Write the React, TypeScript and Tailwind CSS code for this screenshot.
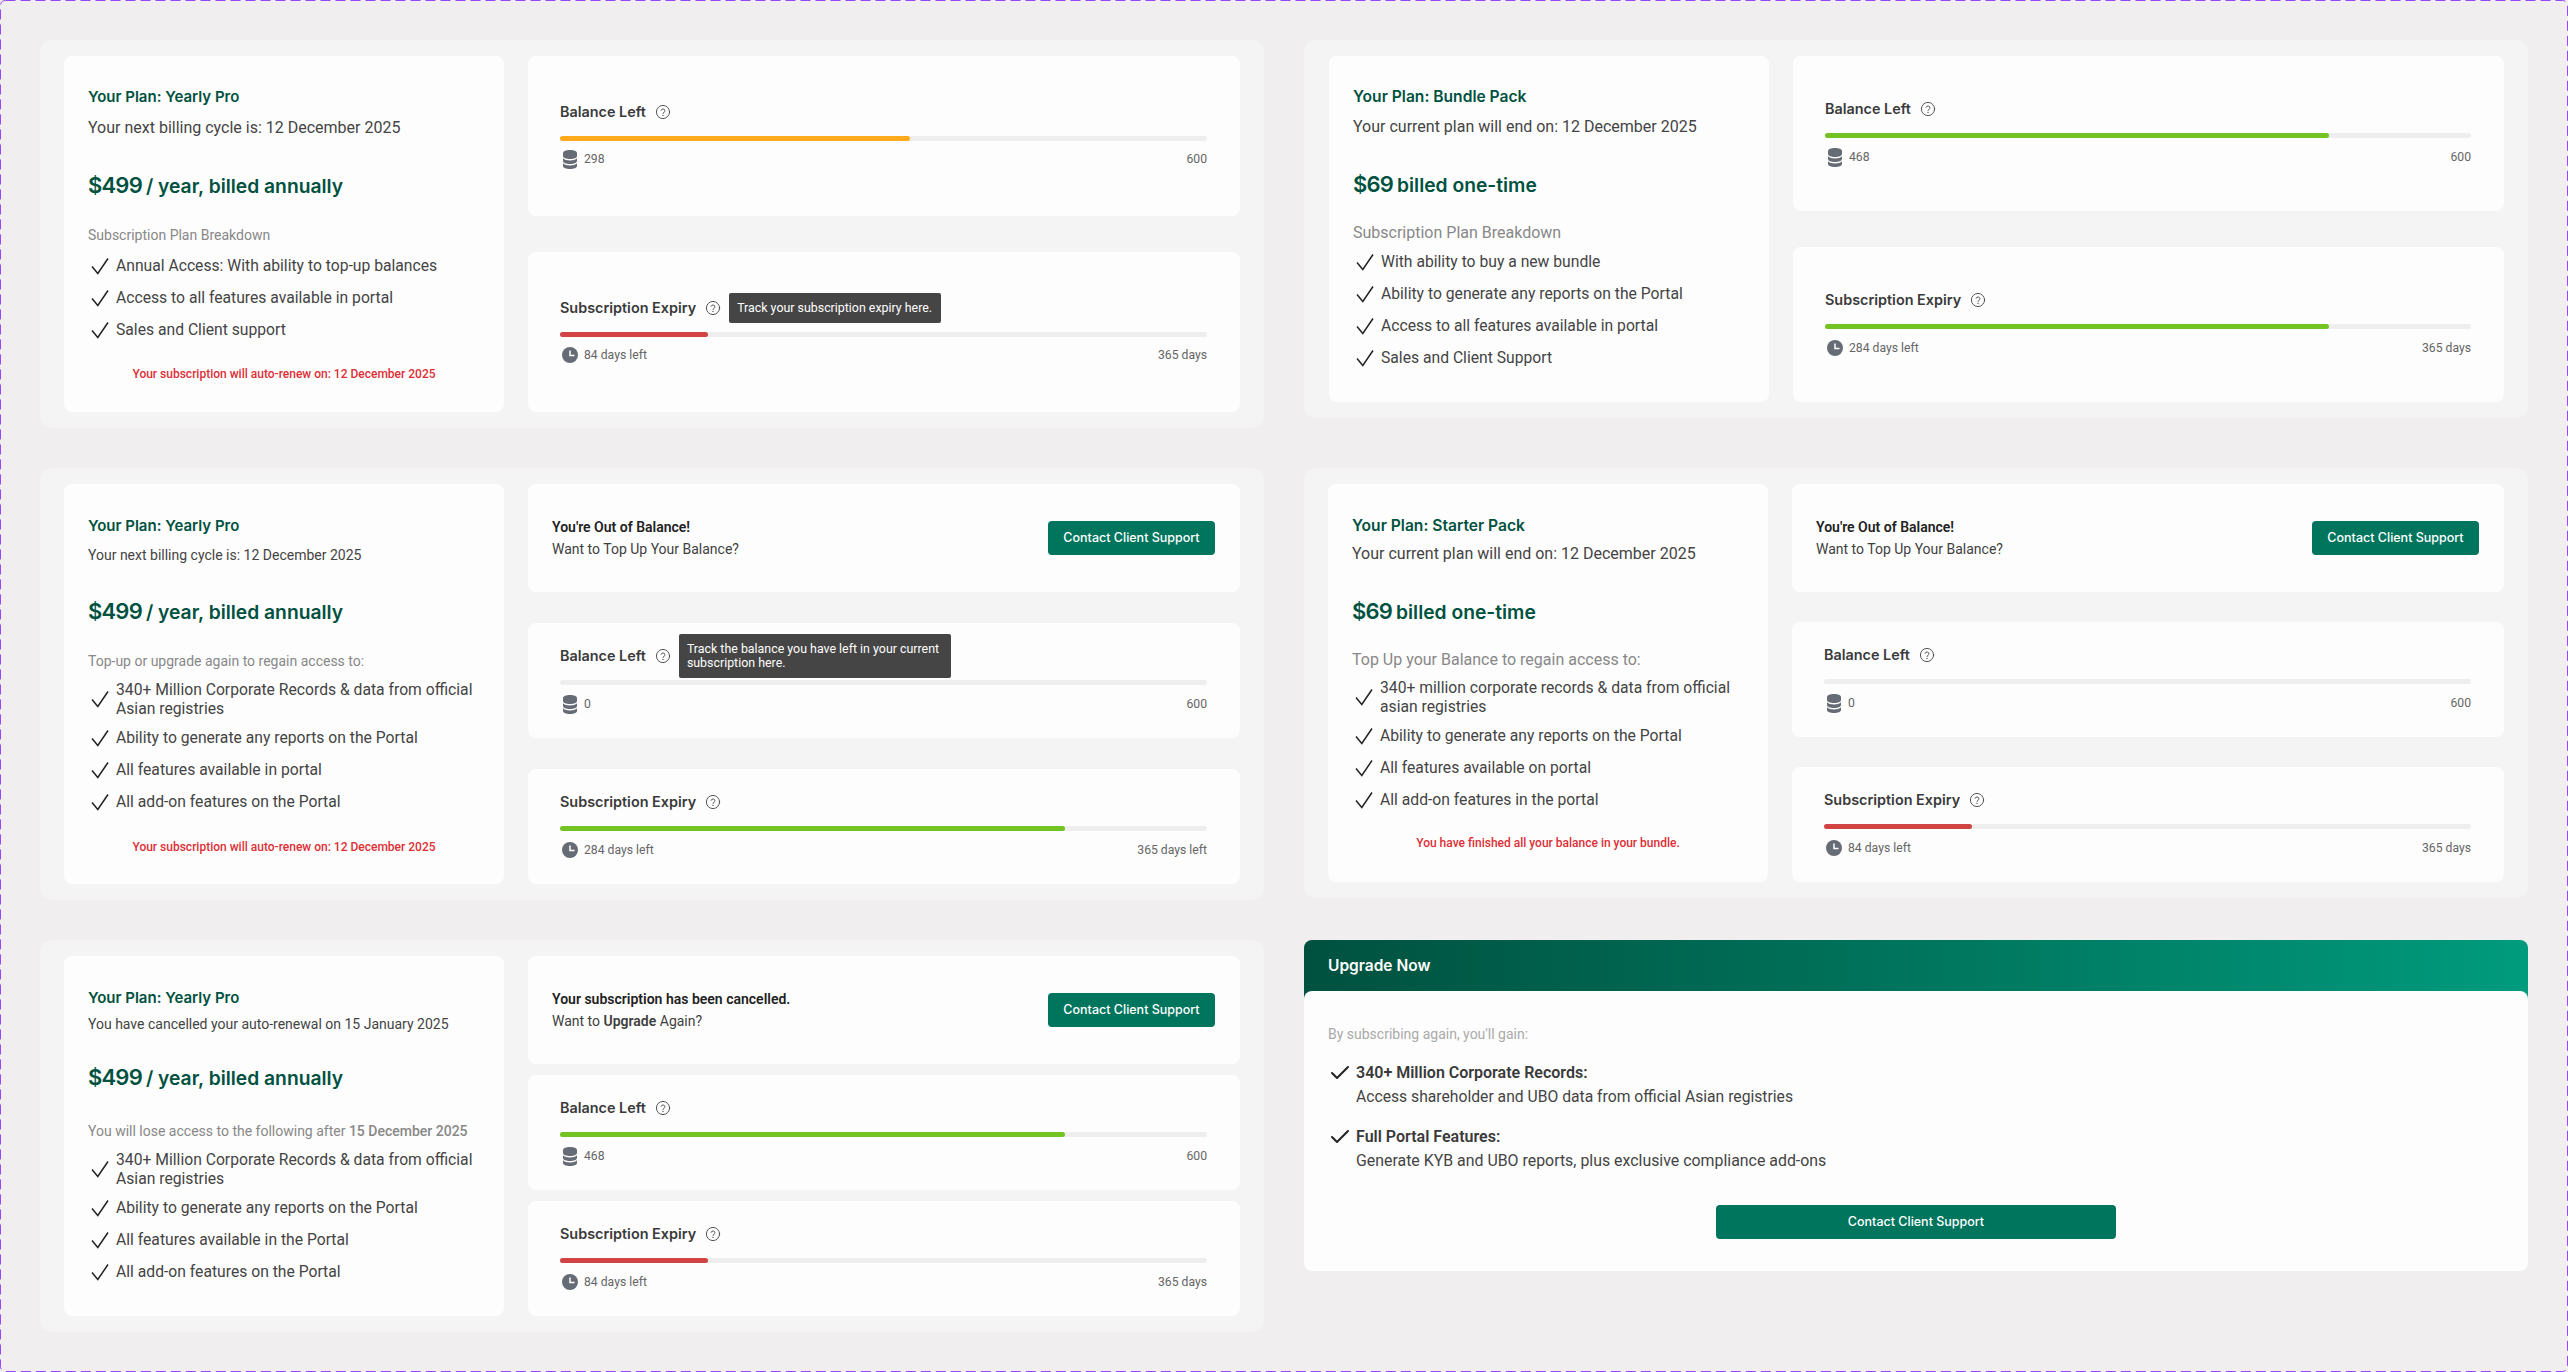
import React from "react";
import { Check } from "lucide-react";

const font = { fontFamily: "Roboto, sans-serif" };

function Question() {
  return (
    <svg width="16" height="16" viewBox="0 0 16 16" fill="none" stroke="#444" strokeWidth="0.9" strokeLinecap="round">
      <circle cx="8" cy="8" r="6.6" />
      <path d="M6.1 6.3a1.95 1.95 0 0 1 3.8.5c0 1.3-1.9 1.7-1.9 2.7" />
      <path d="M8 11.3v.1" strokeWidth="1.2" />
    </svg>
  );
}

function Coins() {
  return (
    <svg width="20" height="19" viewBox="-3 0 20 19" fill="#666C75" className="shrink-0">
      <path d="M0 3C0 1.3 3.1 0 7 0s7 1.3 7 3v3c0 1.7-3.1 3-7 3S0 7.7 0 6Z" />
      <path d="M0 8.2c1.5 1.5 4 2.2 7 2.2s5.5-.7 7-2.2V11c0 1.7-3.1 3-7 3s-7-1.3-7-3Z" />
      <path d="M0 13.2c1.5 1.5 4 2.2 7 2.2s5.5-.7 7-2.2V16c0 1.7-3.1 3-7 3s-7-1.3-7-3Z" />
    </svg>
  );
}

function Clock() {
  return (
    <svg width="20" height="16" viewBox="-2 0 20 16" fill="none" className="shrink-0">
      <circle cx="8" cy="8" r="8" fill="#666C75" />
      <path d="M8 3.5V8.5H12.5" stroke="#fff" strokeWidth="1.5" />
    </svg>
  );
}

function Tick() {
  return (
    <svg width="24" height="24" viewBox="0 0 24 24" fill="none" stroke="#222" strokeWidth="1.5" className="shrink-0">
      <path d="M4 12.5 9.8 19.5 20 4.5" />
    </svg>
  );
}

type MeterProps = {
  title: string;
  barClass: string;
  barWidth: string;
  kind: "coins" | "clock";
  left: string;
  right: string;
  cardClass: string;
  tip?: string;
  tipClass?: string;
};

function Meter({ title, barClass, barWidth, kind, left, right, cardClass, tip, tipClass }: MeterProps) {
  return (
    <div className={`rounded-lg bg-[#FDFDFD] pl-8 pr-[33px] flex flex-col justify-center ${cardClass}`}>
      <div className="flex items-center h-6 gap-[9px] font-['Inter',sans-serif] text-[14.4px] font-semibold text-[#3A3A3A]">
        <span>{title}</span>
        <span className="relative w-4 h-4">
          <Question />
          {tip && (
            <span className={`absolute left-full ml-2 top-1/2 -translate-y-1/2 rounded-[2px] bg-[#454545] px-2 font-['Roboto',sans-serif] text-[12.4px] font-normal leading-[14px] text-white ${tipClass}`}>
              {tip}
            </span>
          )}
        </span>
      </div>
      <div className="mt-3 h-[5px] rounded-full bg-[#EEEEEE]">
        {barWidth !== "0" && <div className={`h-full rounded-full ${barClass} ${barWidth}`} />}
      </div>
      <div className="mt-[9px] mb-[3px] h-5 flex items-center justify-between text-[12.2px] text-[#666666]">
        <span className="flex items-center gap-1">
          {kind === "coins" ? <Coins /> : <Clock />}
          {left}
        </span>
        <span>{right}</span>
      </div>
    </div>
  );
}

function Notice({ title, children, cardClass }: { title: string; children: React.ReactNode; cardClass: string }) {
  return (
    <div className={`rounded-lg bg-[#FDFDFD] pl-6 pr-[25px] flex items-center justify-between ${cardClass}`}>
      <div className="text-sm leading-[22px] text-[#3F3F3F]">
        <p className="font-semibold text-[#222222]">{title}</p>
        <p>{children}</p>
      </div>
      <button className="w-[167px] h-[34px] rounded bg-[#00755E] font-['Inter',sans-serif] text-[12.5px] font-medium text-white">Contact Client Support</button>
    </div>
  );
}

type PlanProps = {
  title: string;
  sub: React.ReactNode;
  amount: string;
  suffix: string;
  label: React.ReactNode;
  items: string[];
  red?: string;
  cls: {
    card: string;
    title: string;
    sub: string;
    price: string;
    label: string;
    list: string;
    red?: string;
  };
};

function Plan({ title, sub, amount, suffix, label, items, red, cls }: PlanProps) {
  return (
    <div className={`w-[440px] rounded-lg bg-[#FDFDFD] px-6 flex flex-col ${cls.card}`}>
      <h3 className={`font-['Inter',sans-serif] font-semibold text-[#00513F] leading-5 ${cls.title}`}>{title}</h3>
      <p className={`text-[#444444] ${cls.sub}`}>{sub}</p>
      <p className={`flex items-baseline gap-1 h-8 leading-8 -translate-y-px font-['Inter',sans-serif] font-semibold text-[#00513F] ${cls.price}`}>
        <span className="text-[22px] tracking-[-0.8px]">{amount}</span>
        <span className="text-[19.25px]">{suffix}</span>
      </p>
      <p className={`leading-5 text-[#888888] ${cls.label}`}>{label}</p>
      <ul className={`flex flex-col gap-2 text-[15.7px] text-[#444444] ${cls.list}`}>
        {items.map((t) => (
          <li key={t} className={`flex items-center gap-1 ${t.length > 45 && t.includes("340") ? "leading-[19px]" : "leading-6"}`}>
            <Tick />
            <span>{t}</span>
          </li>
        ))}
      </ul>
      {red && <p className={`text-center text-xs font-medium leading-4 text-[#DE2F36] ${cls.red}`}>{red}</p>}
    </div>
  );
}

function Panel({ cls, children }: { cls: string; children: React.ReactNode }) {
  return <section className={`w-[1224px] rounded-xl bg-[#F5F4F4] py-4 flex gap-6 ${cls}`}>{children}</section>;
}

function Column({ children }: { children: React.ReactNode }) {
  return <div className="flex-1 flex flex-col justify-between h-full">{children}</div>;
}

const GREEN = "bg-[#73C322]";
const REDBAR = "bg-[#D24343]";
const ORANGE = "bg-[#FFAA1D]";

export default function App() {
  return (
    <div className="relative w-[2568px] h-[1372px] overflow-hidden bg-[#F0EEEF] p-10 flex gap-10 items-start" style={font}>
      <div className="flex flex-col gap-10">
        <Panel cls="h-[388px] px-6">
          <Plan
            title="Your Plan: Yearly Pro"
            sub="Your next billing cycle is: 12 December 2025"
            amount="$499"
            suffix="/ year, billed annually"
            label="Subscription Plan Breakdown"
            items={["Annual Access: With ability to top-up balances", "Access to all features available in portal", "Sales and Client support"]}
            red="Your subscription will auto-renew on: 12 December 2025"
            cls={{ card: "pt-[31px]", title: "text-[15px]", sub: "mt-[9px] text-base leading-6", price: "mt-[30px]", label: "mt-[23px] text-sm", list: "mt-[9px]", red: "mt-6" }}
          />
          <Column>
            <Meter cardClass="h-40" title="Balance Left" barClass={ORANGE} barWidth="w-[54.1%]" kind="coins" left="298" right="600" />
            <Meter
              cardClass="h-40"
              title="Subscription Expiry"
              barClass={REDBAR}
              barWidth="w-[22.9%]"
              kind="clock"
              left="84 days left"
              right="365 days"
              tip="Track your subscription expiry here."
              tipClass="w-[212px] py-2 whitespace-nowrap"
            />
          </Column>
        </Panel>

        <Panel cls="h-[432px] px-6">
          <Plan
            title="Your Plan: Yearly Pro"
            sub="Your next billing cycle is: 12 December 2025"
            amount="$499"
            suffix="/ year, billed annually"
            label="Top-up or upgrade again to regain access to:"
            items={["340+ Million Corporate Records & data from official Asian registries", "Ability to generate any reports on the Portal", "All features available in portal", "All add-on features on the Portal"]}
            red="Your subscription will auto-renew on: 12 December 2025"
            cls={{ card: "pt-8", title: "text-[15px]", sub: "mt-[9px] text-sm leading-5", price: "mt-[31px]", label: "mt-[23px] text-sm", list: "mt-[9px]", red: "mt-[25px]" }}
          />
          <Column>
            <Notice cardClass="h-[108px]" title="You're Out of Balance!">Want to Top Up Your Balance?</Notice>
            <Meter
              cardClass="h-[115px]"
              title="Balance Left"
              barClass={GREEN}
              barWidth="0"
              kind="coins"
              left="0"
              right="600"
              tip="Track the balance you have left in your current subscription here."
              tipClass="w-[272px] py-[8px]"
            />
            <Meter cardClass="h-[115px]" title="Subscription Expiry" barClass={GREEN} barWidth="w-[78%]" kind="clock" left="284 days left" right="365 days left" />
          </Column>
        </Panel>

        <Panel cls="h-[392px] px-6">
          <Plan
            title="Your Plan: Yearly Pro"
            sub="You have cancelled your auto-renewal on 15 January 2025"
            amount="$499"
            suffix="/ year, billed annually"
            label={<>You will lose access to the following after <b className="font-medium">15 December 2025</b></>}
            items={["340+ Million Corporate Records & data from official Asian registries", "Ability to generate any reports on the Portal", "All features available in the Portal", "All add-on features on the Portal"]}
            cls={{ card: "pt-8", title: "text-[15px]", sub: "mt-[6px] text-sm leading-5", price: "mt-7", label: "mt-[27px] text-sm", list: "mt-[9px]" }}
          />
          <Column>
            <Notice cardClass="h-[108px]" title="Your subscription has been cancelled.">Want to <b className="font-semibold">Upgrade</b> Again?</Notice>
            <Meter cardClass="h-[115px]" title="Balance Left" barClass={GREEN} barWidth="w-[78%]" kind="coins" left="468" right="600" />
            <Meter cardClass="h-[115px]" title="Subscription Expiry" barClass={REDBAR} barWidth="w-[22.9%]" kind="clock" left="84 days left" right="365 days" />
          </Column>
        </Panel>
      </div>

      <div className="flex flex-col">
        <Panel cls="h-[378px] pl-[25px] pr-6">
          <Plan
            title="Your Plan: Bundle Pack"
            sub="Your current plan will end on: 12 December 2025"
            amount="$69"
            suffix="billed one-time"
            label="Subscription Plan Breakdown"
            items={["With ability to buy a new bundle", "Ability to generate any reports on the Portal", "Access to all features available in portal", "Sales and Client Support"]}
            cls={{ card: "pt-[31px]", title: "text-[15.6px]", sub: "mt-2 text-base leading-6", price: "mt-[30px]", label: "mt-[22px] text-base", list: "mt-[7px]" }}
          />
          <Column>
            <Meter cardClass="h-[155px]" title="Balance Left" barClass={GREEN} barWidth="w-[78%]" kind="coins" left="468" right="600" />
            <Meter cardClass="h-[155px]" title="Subscription Expiry" barClass={GREEN} barWidth="w-[78%]" kind="clock" left="284 days left" right="365 days" />
          </Column>
        </Panel>

        <Panel cls="h-[430px] mt-[50px] px-6">
          <Plan
            title="Your Plan: Starter Pack"
            sub="Your current plan will end on: 12 December 2025"
            amount="$69"
            suffix="billed one-time"
            label="Top Up your Balance to regain access to:"
            items={["340+ million corporate records & data from official asian registries", "Ability to generate any reports on the Portal", "All features available on portal", "All add-on features in the portal"]}
            red="You have finished all your balance in your bundle."
            cls={{ card: "pt-8", title: "text-[15.6px]", sub: "mt-[6px] text-base leading-6", price: "mt-[30px]", label: "mt-[22px] text-base", list: "mt-2", red: "mt-[23px]" }}
          />
          <Column>
            <Notice cardClass="h-[108px]" title="You're Out of Balance!">Want to Top Up Your Balance?</Notice>
            <Meter cardClass="h-[115px]" title="Balance Left" barClass={GREEN} barWidth="0" kind="coins" left="0" right="600" />
            <Meter cardClass="h-[115px]" title="Subscription Expiry" barClass={REDBAR} barWidth="w-[22.9%]" kind="clock" left="84 days left" right="365 days" />
          </Column>
        </Panel>

        <section className="w-[1224px] mt-[42px]">
          <header className="h-[59px] rounded-t-lg bg-gradient-to-r from-[#00513F] to-[#009B7D] px-6 pt-[14px] font-['Inter',sans-serif] text-[15.5px] leading-6 font-semibold text-white">Upgrade Now</header>
          <div className="relative -mt-2 rounded-lg bg-[#FDFDFD] px-6 pt-[33px] pb-8 flex flex-col">
            <p className="text-sm leading-5 text-[#AAAAAA]">By subscribing again, you'll gain:</p>
            <div className="mt-[17px] flex flex-col gap-4">
              <div className="flex gap-1">
                <Check size={24} strokeWidth={2} className="text-[#222222] shrink-0" />
                <div className="text-[15.7px] leading-6 text-[#444444]">
                  <p className="text-base font-semibold text-[#3A3A3A]">340+ Million Corporate Records:</p>
                  <p>Access shareholder and UBO data from official Asian registries</p>
                </div>
              </div>
              <div className="flex gap-1">
                <Check size={24} strokeWidth={2} className="text-[#222222] shrink-0" />
                <div className="text-[15.9px] leading-6 text-[#444444]">
                  <p className="text-base font-semibold text-[#3A3A3A]">Full Portal Features:</p>
                  <p>Generate KYB and UBO reports, plus exclusive compliance add-ons</p>
                </div>
              </div>
            </div>
            <button className="self-center mt-8 w-[400px] h-[34px] rounded bg-[#00755E] font-['Inter',sans-serif] text-[12.5px] font-medium text-white">Contact Client Support</button>
          </div>
        </section>
      </div>

      <svg className="absolute inset-0 pointer-events-none" width="2568" height="1372" fill="none">
        <rect x="0.5" y="0.5" width="2567" height="1371" rx="5" stroke="#9747FF" strokeDasharray="10 5" />
      </svg>
    </div>
  );
}
